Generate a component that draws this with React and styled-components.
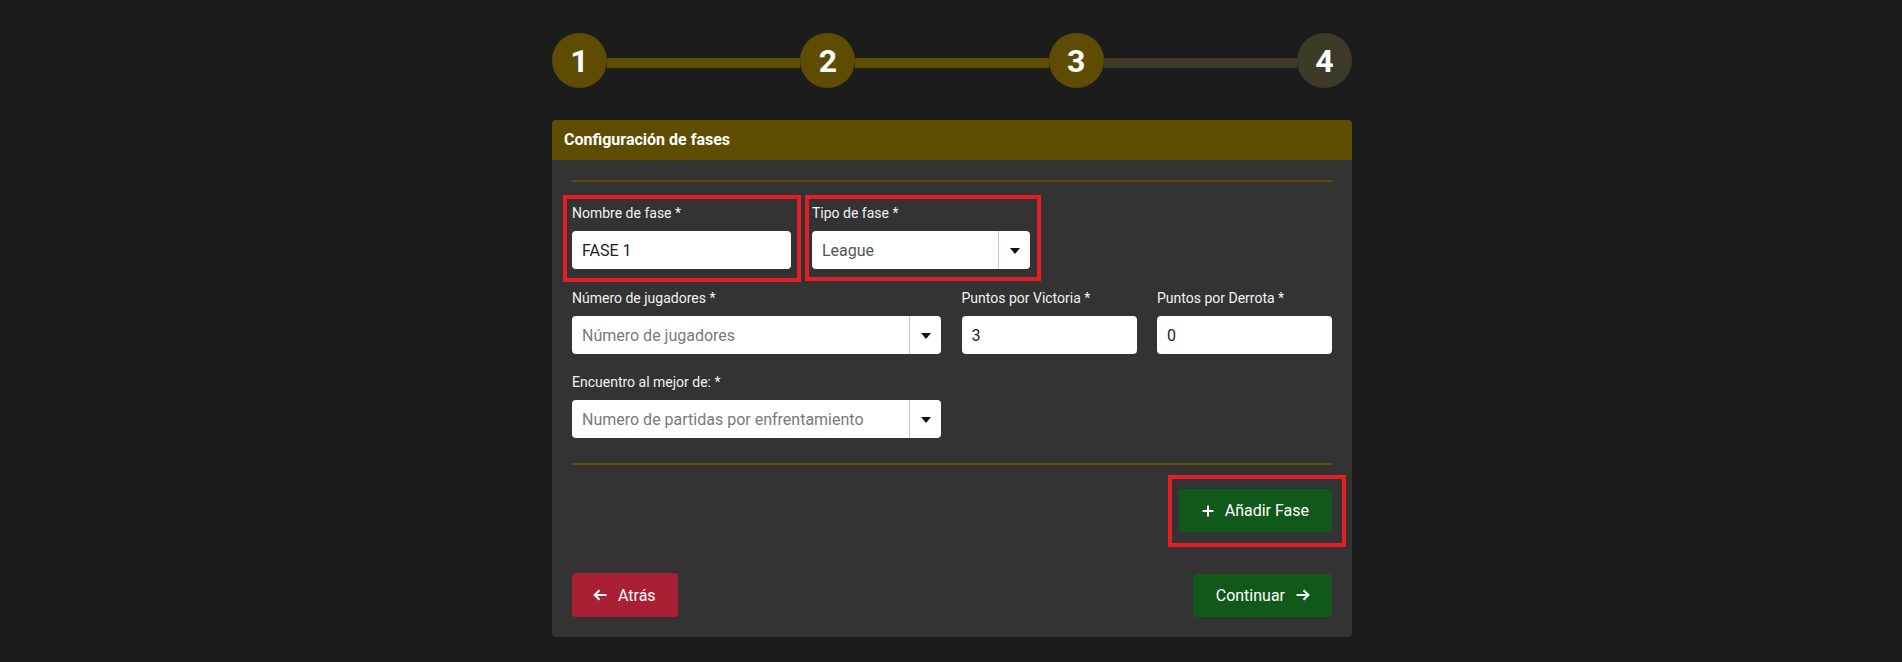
import { Fragment } from "react";
import styled, { createGlobalStyle } from "styled-components";

const GlobalStyle = createGlobalStyle`
  html, body {
    margin: 0;
    padding: 0;
    background: #1c1c1c;
    font-family: Roboto, "Liberation Sans", Arial, sans-serif;
  }
  * {
    box-sizing: border-box;
  }
`;

const Page = styled.div`
  width: 800px;
  margin: 0 0 0 calc(50% - 399px);
  padding: 33px 0 24px;
`;

const Stepper = styled.div`
  display: flex;
  align-items: center;
  margin-bottom: 32px;
`;

const StepCircle = styled.div`
  width: 55px;
  height: 55px;
  border-radius: 50%;
  flex-shrink: 0;
  display: flex;
  align-items: center;
  justify-content: center;
  background: ${(p) => (p.$active ? "#5e4c02" : "#3d3a27")};
  color: #fff;
  font-size: 32px;
  font-weight: 700;
`;

const StepLine = styled.div`
  flex: 1;
  height: 10px;
  margin-top: 5px;
  background: ${(p) => (p.$active ? "#5e4c02" : "#3d3a27")};
`;

const Card = styled.div`
  background: #333333;
  border-radius: 4px;
`;

const CardHeader = styled.div`
  height: 40px;
  line-height: 40px;
  padding: 0 12px;
  background: #5e4c02;
  border-radius: 4px 4px 0 0;
  color: #fff;
  font-size: 16px;
  font-weight: 700;
`;

const CardBody = styled.div`
  padding: 20px;
`;

const Rule = styled.hr`
  border: none;
  height: 2px;
  background: #5e4c02;
  margin: ${(p) => p.$margin};
`;

const Row = styled.div`
  display: grid;
  grid-template-columns: ${(p) => p.$cols};
  column-gap: ${(p) => p.$gap || "20px"};
  margin-bottom: ${(p) => p.$mb || "0"};
`;

const Field = styled.div`
  position: relative;
  display: flex;
  flex-direction: column;

  ${(p) =>
    p.$highlight &&
    `
    &::after {
      content: "";
      position: absolute;
      inset: ${p.$highlight};
      border: 4px solid #e31e26;
      pointer-events: none;
    }
  `}
`;

const Label = styled.label`
  color: #f2f2f2;
  font-size: 14px;
  line-height: 16px;
  margin-bottom: 10px;
`;

const TextInput = styled.input`
  height: 38px;
  width: 100%;
  border: none;
  border-radius: 4px;
  background: #fff;
  padding: 0 10px;
  font-family: inherit;
  font-size: 16px;
  color: #222;
  outline: none;
`;

const SelectBox = styled.div`
  height: 38px;
  display: flex;
  background: #fff;
  border-radius: 4px;
  overflow: hidden;
`;

const SelectValue = styled.div`
  flex: 1;
  display: flex;
  align-items: center;
  padding: 0 10px;
  font-size: 16px;
  color: ${(p) => (p.$placeholder ? "#7a7a7a" : "#555")};
  white-space: nowrap;
  overflow: hidden;
`;

const SelectToggle = styled.div`
  width: 32px;
  border-left: 1px solid #c9c4dc;
  display: flex;
  align-items: center;
  justify-content: center;
`;

const Caret = styled.span`
  width: 0;
  height: 0;
  border-left: 5.5px solid transparent;
  border-right: 5.5px solid transparent;
  border-top: 6px solid #111;
  margin-top: 2px;
`;

const ActionRow = styled.div`
  display: flex;
  justify-content: ${(p) => p.$justify || "flex-end"};
  align-items: center;
  margin-bottom: ${(p) => p.$mb || "0"};
`;

const ButtonWrap = styled.div`
  position: relative;

  &::after {
    content: "";
    position: absolute;
    inset: -14px -14px -15px -11px;
    border: 4px solid #e31e26;
    pointer-events: none;
  }
`;

const Button = styled.button`
  display: inline-flex;
  align-items: center;
  gap: 11px;
  height: ${(p) => p.$h || "43px"};
  padding: 0 ${(p) => p.$pr || "23px"} 0 ${(p) => p.$pl || "23px"};
  border: none;
  border-radius: 4px;
  background: ${(p) => (p.$variant === "danger" ? "#a91f33" : "#11591a")};
  color: #fff;
  font-family: inherit;
  font-size: 16px;
  cursor: pointer;
`;

const PlusIcon = () => (
  <svg width="12" height="12" viewBox="0 0 12 12">
    <path d="M6 0.5V11.5M0.5 6H11.5" stroke="#fff" strokeWidth="2" fill="none" />
  </svg>
);

const ArrowIcon = ({ dir }) => (
  <svg width="14" height="12" viewBox="0 0 14 12">
    {dir === "left" ? (
      <path
        d="M13.5 6H1.8M6.5 1.2L1.6 6L6.5 10.8"
        stroke="#fff"
        strokeWidth="2"
        fill="none"
      />
    ) : (
      <path
        d="M0.5 6H12.2M7.5 1.2L12.4 6L7.5 10.8"
        stroke="#fff"
        strokeWidth="2"
        fill="none"
      />
    )}
  </svg>
);

const Select = ({ value, placeholder }) => (
  <SelectBox>
    <SelectValue $placeholder={!value}>{value || placeholder}</SelectValue>
    <SelectToggle>
      <Caret />
    </SelectToggle>
  </SelectBox>
);

const steps = [1, 2, 3, 4];
const current = 3;

export default function App() {
  return (
    <>
      <GlobalStyle />
      <Page>
        <Stepper>
          {steps.map((n, i) => (
            <Fragment key={n}>
              {i > 0 && <StepLine $active={n <= current} />}
              <StepCircle $active={n <= current}>{n}</StepCircle>
            </Fragment>
          ))}
        </Stepper>

        <Card>
          <CardHeader>Configuración de fases</CardHeader>
          <CardBody>
            <Rule $margin="0 0 23px" />

            <Row $cols="219px 218px" $gap="21px" $mb="21px">
              <Field $highlight="-10px -10px -13px -9px">
                <Label>Nombre de fase *</Label>
                <TextInput defaultValue="FASE 1" />
              </Field>
              <Field $highlight="-10px -11px -12px -7px">
                <Label>Tipo de fase *</Label>
                <Select value="League" />
              </Field>
            </Row>

            <Row $cols="369px 175px 175px" $gap="20.5px" $mb="20px">
              <Field>
                <Label>Número de jugadores *</Label>
                <Select placeholder="Número de jugadores" />
              </Field>
              <Field>
                <Label>Puntos por Victoria *</Label>
                <TextInput defaultValue="3" />
              </Field>
              <Field>
                <Label>Puntos por Derrota *</Label>
                <TextInput defaultValue="0" />
              </Field>
            </Row>

            <Row $cols="369px">
              <Field>
                <Label>Encuentro al mejor de: *</Label>
                <Select placeholder="Numero de partidas por enfrentamiento" />
              </Field>
            </Row>

            <Rule $margin="25px 0 24px" />

            <ActionRow $mb="41px">
              <ButtonWrap>
                <Button>
                  <PlusIcon />
                  Añadir Fase
                </Button>
              </ButtonWrap>
            </ActionRow>

            <ActionRow $justify="space-between">
              <Button $variant="danger" $h="44px" $pl="21px" $pr="22px">
                <ArrowIcon dir="left" />
                Atrás
              </Button>
              <Button $pr="22px">
                Continuar
                <ArrowIcon dir="right" />
              </Button>
            </ActionRow>
          </CardBody>
        </Card>
      </Page>
    </>
  );
}
